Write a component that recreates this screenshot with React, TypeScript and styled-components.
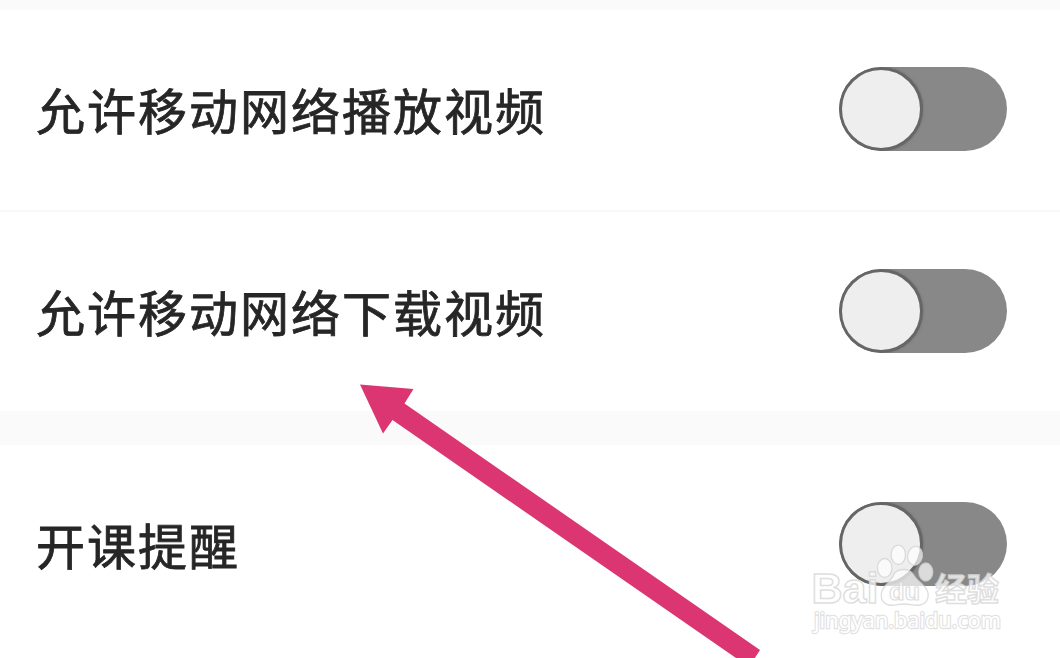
import { useState } from "react";
import styled, { createGlobalStyle } from "styled-components";

const theme = {
  white: "#ffffff",
  gap: "#fafafa",
  line: "#f7f7f7",
  text: "#262626",
  track: "#888888",
  ring: "#666666",
  knob: "#eeeeee",
  arrow: "#db3572",
};

const sections = [
  ["允许移动网络播放视频", "允许移动网络下载视频"],
  ["开课提醒"],
];

interface SettingRowProps {
  label: string;
}

const SettingRow = ({ label }: SettingRowProps) => {
  const [on, setOn] = useState(false);

  return (
    <Row>
      <Label>{label}</Label>
      <Switch
        role="switch"
        aria-checked={on}
        aria-label={label}
        $on={on}
        onClick={() => setOn(!on)}
      >
        <Knob />
      </Switch>
    </Row>
  );
};

const Arrow = () => (
  <ArrowSvg width="402" height="275" viewBox="359 383 402 275">
    <path
      d="M360 384.5L413.5 389L404.5 403.5L760 650L749 667L392.5 420L383 433.5Z"
      fill={theme.arrow}
    />
  </ArrowSvg>
);

const Watermark = () => (
  <Mark width="200" height="100" viewBox="808 540 200 100">
    <g
      fill="#ffffff"
      fillOpacity="0.7"
      stroke="#d2d2d2"
      strokeOpacity="0.75"
      strokeWidth="1.3"
    >
      <ellipse cx="884.7" cy="568" rx="7.3" ry="9.5" />
      <ellipse cx="898.3" cy="554.8" rx="7.2" ry="9.7" />
      <ellipse cx="915" cy="555.8" rx="7.4" ry="9.5" transform="rotate(10 915 555.8)" />
      <ellipse cx="925.8" cy="572" rx="7" ry="9" />
      <path d="M894 574C898 568 909 568 913 574C916 579 920 582 924 586C931 593 929 603 920 605C915 606 910 604 904 604C898 604 894 606 889 605C880 603 879 593 885 586C889 582 892 579 894 574Z" />
    </g>
    <g
      fill="#ffffff"
      fillOpacity="0.75"
      stroke="#d4d4d4"
      strokeOpacity="0.75"
      strokeWidth="1.5"
      fontFamily='"Liberation Sans", Arial, sans-serif'
      fontWeight="700"
    >
      <text x="811.5" y="603" fontSize="43" textLength="67" lengthAdjust="spacingAndGlyphs">
        Bai
      </text>
      <text
        x="889"
        y="599.5"
        fontSize="24"
        fillOpacity="0.5"
        strokeWidth="1.2"
        textLength="31"
        lengthAdjust="spacingAndGlyphs"
      >
        du
      </text>
      <text
        x="935"
        y="601"
        fontSize="32"
        fontFamily='"Noto Sans CJK SC", sans-serif'
      >
        经验
      </text>
    </g>
    <text
      x="814"
      y="628"
      fontSize="21.5"
      textLength="187"
      lengthAdjust="spacingAndGlyphs"
      fontFamily='"Noto Sans", sans-serif'
      fill="#ffffff"
      stroke="#dadada"
      strokeWidth="2.4"
      strokeOpacity="0.8"
      paintOrder="stroke"
    >
      jingyan.baidu.com
    </text>
  </Mark>
);

const App = () => (
  <>
    <GlobalStyle />
    <Page>
      {sections.map((labels) => (
        <Section key={labels[0]}>
          {labels.map((label) => (
            <SettingRow key={label} label={label} />
          ))}
        </Section>
      ))}
      <Arrow />
      <Watermark />
    </Page>
  </>
);

const GlobalStyle = createGlobalStyle`
  body {
    margin: 0;
    background-color: ${theme.white};
  }
`;

const Page = styled.div`
  position: relative;
  box-sizing: border-box;
  display: flex;
  flex-direction: column;
  gap: 34px;
  height: 658px;
  padding-top: 10px;
  overflow: hidden;
  background-color: ${theme.gap};
  font-family: "Noto Sans CJK SC", sans-serif;
`;

const Section = styled.div`
  flex-shrink: 0;
  background-color: ${theme.white};
  &:last-of-type {
    flex: 1;
  }
`;

const Row = styled.div`
  box-sizing: border-box;
  display: flex;
  align-items: center;
  justify-content: space-between;
  height: 200px;
  padding: 0 53px 2px 36px;
  & + & {
    height: 201px;
    border-top: 2px solid ${theme.line};
    padding-bottom: 1px;
  }
`;

const Label = styled.div`
  font-size: 49px;
  line-height: 74px;
  letter-spacing: 2px;
  color: ${theme.text};
  -webkit-text-stroke: 0.8px ${theme.text};
`;

const Switch = styled.button<{ $on: boolean }>`
  display: flex;
  align-items: center;
  justify-content: ${({ $on }) => ($on ? "flex-end" : "flex-start")};
  width: 168px;
  height: 84px;
  padding: 0;
  border: none;
  border-radius: 42px;
  overflow: hidden;
  background-color: ${theme.track};
  cursor: pointer;
`;

const Knob = styled.span`
  box-sizing: border-box;
  width: 84px;
  height: 84px;
  border: 3px solid ${theme.ring};
  border-radius: 50%;
  background-color: ${theme.knob};
  box-shadow: 0 0 3px rgba(0, 0, 0, 0.2);
`;

const ArrowSvg = styled.svg`
  position: absolute;
  left: 359px;
  top: 383px;
`;

const Mark = styled.svg`
  position: absolute;
  left: 808px;
  top: 540px;
`;

export default App;
